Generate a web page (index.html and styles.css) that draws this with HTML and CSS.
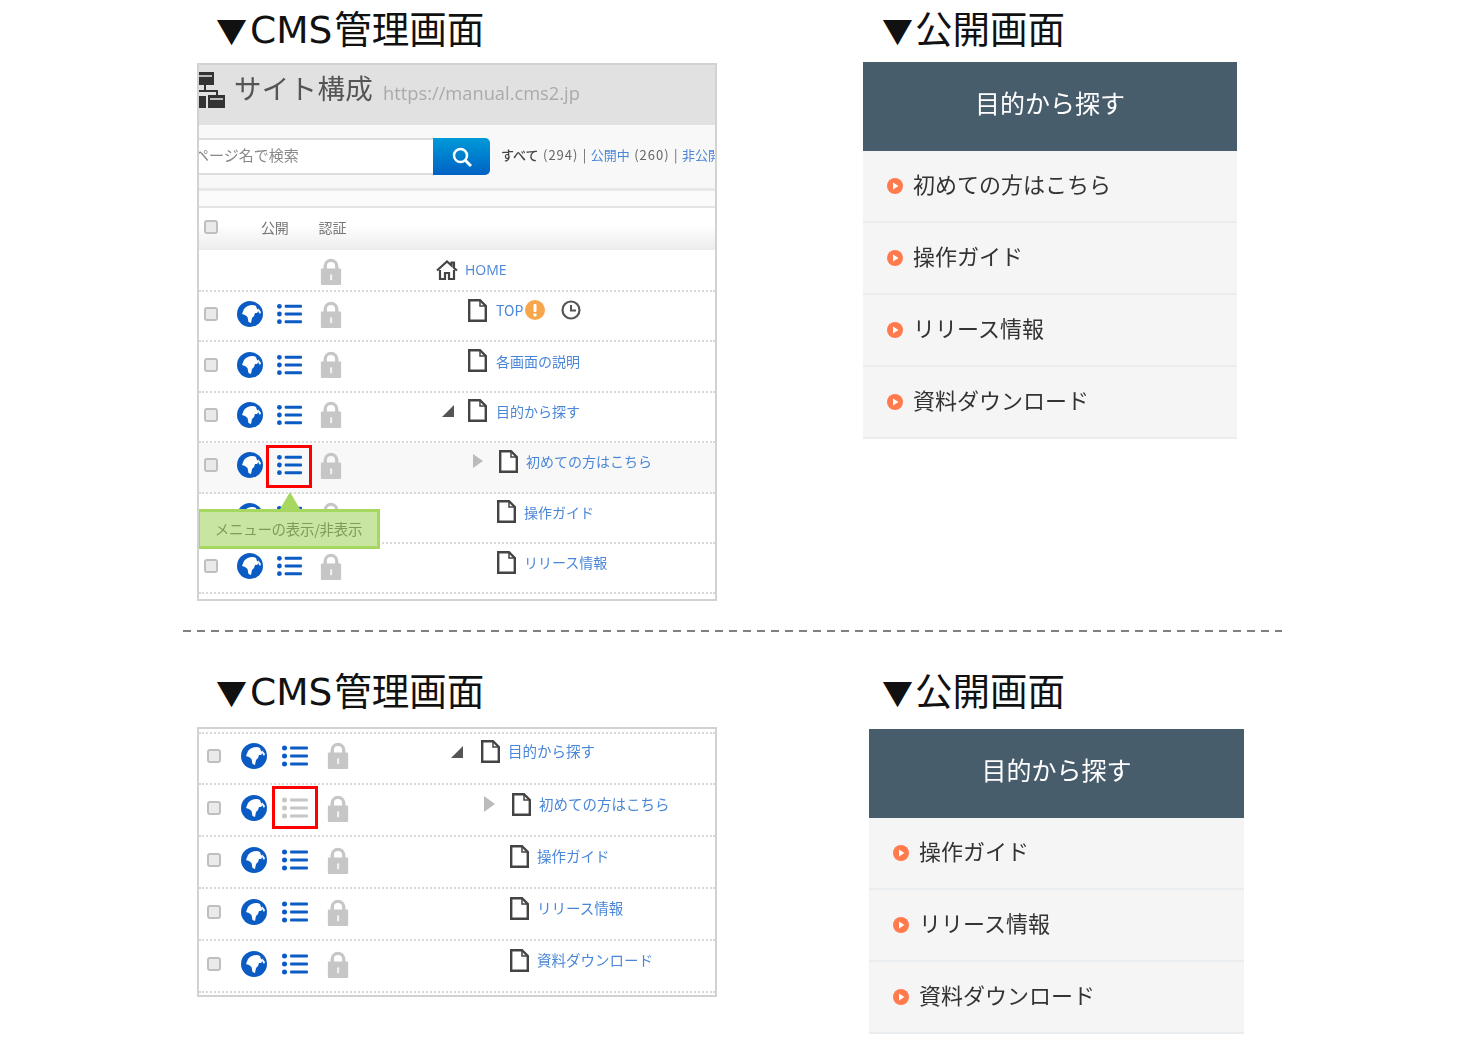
FILE: index.html
```html
<!DOCTYPE html>
<html lang="ja">
<head>
<meta charset="utf-8">
<title>メニューの表示/非表示</title>
<link rel="stylesheet" href="styles.css">
</head>
<body>
<svg class="sprite" xmlns="http://www.w3.org/2000/svg">
  <symbol id="globe" viewBox="0 0 26 26">
    <circle cx="13" cy="13" r="13" fill="#0a5cc4"/>
    <path d="M7 8C10 4 16 3 19 5L20 8L22 9L20 12L18 12L17 15L15 17L14 22L11.500 21L10.500 16L8 14L5 13Z" fill="#fff"/>
    <path d="M21 7L24 11L23 13L21.500 11Z" fill="#fff"/>
  </symbol>
  <symbol id="list" viewBox="0 0 26 22">
    <circle cx="2.500" cy="3" r="2.500"/><circle cx="2.500" cy="11" r="2.500"/><circle cx="2.500" cy="19" r="2.500"/>
    <rect x="8" y="1.500" width="18" height="3" rx="1"/><rect x="8" y="9.500" width="18" height="3" rx="1"/><rect x="8" y="17.500" width="18" height="3" rx="1"/>
  </symbol>
  <symbol id="lock" viewBox="0 0 22 28">
    <path d="M5 13V8.500a6 6 0 0 1 12 0V13" fill="none" stroke="#c6c6c6" stroke-width="3.500"/>
    <rect x="0.500" y="11" width="21" height="17" rx="1" fill="#c6c6c6"/>
    <rect x="10" y="17" width="2.200" height="6" fill="#f2f2f2"/>
  </symbol>
  <symbol id="page" viewBox="0 0 19 23">
    <path d="M1.200 1.200H12L17.800 7V21.800H1.200Z" fill="#fff" stroke="#444" stroke-width="2.400"/>
    <path d="M12 1V7H18" fill="none" stroke="#444" stroke-width="1.500"/>
  </symbol>
  <symbol id="home" viewBox="0 0 22 20">
    <path d="M1 10.500L11 1.500L15.500 5.500V2.500H18V8L21 10.500" fill="none" stroke="#444" stroke-width="2.200"/>
    <path d="M4 10V19H9V13H13V19H18V10" fill="#fff" stroke="#444" stroke-width="2.200"/>
  </symbol>
  <symbol id="clock" viewBox="0 0 20 20">
    <circle cx="10" cy="10" r="8.500" fill="#fff" stroke="#555" stroke-width="2.200"/>
    <path d="M10 5V10.500H15" fill="none" stroke="#555" stroke-width="2"/>
  </symbol>
  <symbol id="warn" viewBox="0 0 20 20">
    <circle cx="10" cy="10" r="10" fill="#f7a64c"/>
    <rect x="8.500" y="4" width="3" height="8" rx="1" fill="#fff"/>
    <circle cx="10" cy="15" r="1.700" fill="#fff"/>
  </symbol>
  <symbol id="sitemap" viewBox="0 0 28 36">
    <rect x="0" y="0" width="17" height="13" fill="#333"/><rect x="2" y="3" width="13" height="2" fill="#bbb"/>
    <path d="M8 13V19M0 19H20V24" fill="none" stroke="#333" stroke-width="2"/>
    <rect x="0" y="24" width="9" height="12" fill="#333"/>
    <rect x="11" y="23" width="17" height="13" fill="#333"/><rect x="13" y="26" width="13" height="2" fill="#bbb"/>
  </symbol>
  <symbol id="search" viewBox="0 0 20 20">
    <circle cx="8.500" cy="8.500" r="6.500" fill="none" stroke="#fff" stroke-width="2.500"/>
    <path d="M13 13L19 19" stroke="#fff" stroke-width="3"/>
  </symbol>
  <symbol id="bullet" viewBox="0 0 16 16">
    <circle cx="8" cy="8" r="8" fill="#ff7a4d"/>
    <path d="M6 4.500L11.500 8L6 11.500Z" fill="#fff"/>
  </symbol>
</svg>

<section class="sheet sheet-top">
  <div class="col-cms">
    <h2 class="heading"><span class="h-tri">▼</span><span class="h-cms">CMS</span>管理画面</h2>
    <div class="cms cms-a">
      <div class="title-bar">
        <svg class="i-sitemap"><use href="#sitemap"/></svg>
        <span class="title-text">サイト構成</span>
        <span class="title-url">https://manual.cms2.jp</span>
      </div>
      <div class="search-bar">
        <div class="search-input"><span class="search-ph">ページ名で検索</span></div>
        <div class="search-btn"><svg class="i-search"><use href="#search"/></svg></div>
        <div class="filter"><b class="filter-on">すべて</b> <span class="num">(294)</span> | <span class="link">公開中</span> <span class="num">(260)</span> | <span class="link">非公開</span></div>
      </div>
      <div class="band"></div>
      <div class="thead">
        <span class="check"></span>
        <span class="th th-pub">公開</span>
        <span class="th th-auth">認証</span>
      </div>
      <div class="row row-home">
        <svg class="i-lock lock-only"><use href="#lock"/></svg>
        <div class="tree tree-home"><svg class="i-home"><use href="#home"/></svg><span class="link label label-home">HOME</span></div>
      </div>
      <div class="row">
        <span class="check"></span><svg class="i-globe"><use href="#globe"/></svg><span class="list-cell"><svg class="i-list"><use href="#list"/></svg></span><svg class="i-lock"><use href="#lock"/></svg>
        <div class="tree d1"><span class="slot"></span><svg class="i-page"><use href="#page"/></svg><span class="link label">TOP</span><svg class="i-warn"><use href="#warn"/></svg><svg class="i-clock"><use href="#clock"/></svg></div>
      </div>
      <div class="row">
        <span class="check"></span><svg class="i-globe"><use href="#globe"/></svg><span class="list-cell"><svg class="i-list"><use href="#list"/></svg></span><svg class="i-lock"><use href="#lock"/></svg>
        <div class="tree d1"><span class="slot"></span><svg class="i-page"><use href="#page"/></svg><span class="link label">各画面の説明</span></div>
      </div>
      <div class="row">
        <span class="check"></span><svg class="i-globe"><use href="#globe"/></svg><span class="list-cell"><svg class="i-list"><use href="#list"/></svg></span><svg class="i-lock"><use href="#lock"/></svg>
        <div class="tree d1"><span class="slot"><span class="tri-open"></span></span><svg class="i-page"><use href="#page"/></svg><span class="link label">目的から探す</span></div>
      </div>
      <div class="row row-hover">
        <span class="check"></span><svg class="i-globe"><use href="#globe"/></svg>
        <span class="list-cell"><svg class="i-list"><use href="#list"/></svg><span class="mark"></span>
          <span class="tip">メニューの表示/非表示</span></span>
        <svg class="i-lock"><use href="#lock"/></svg>
        <div class="tree d2"><span class="slot"><span class="tri-closed"></span></span><svg class="i-page"><use href="#page"/></svg><span class="link label">初めての方はこちら</span></div>
      </div>
      <div class="row">
        <span class="check"></span><svg class="i-globe"><use href="#globe"/></svg><span class="list-cell"><svg class="i-list"><use href="#list"/></svg></span><svg class="i-lock"><use href="#lock"/></svg>
        <div class="tree leaf"><span class="slot"></span><svg class="i-page"><use href="#page"/></svg><span class="link label">操作ガイド</span></div>
      </div>
      <div class="row">
        <span class="check"></span><svg class="i-globe"><use href="#globe"/></svg><span class="list-cell"><svg class="i-list"><use href="#list"/></svg></span><svg class="i-lock"><use href="#lock"/></svg>
        <div class="tree leaf"><span class="slot"></span><svg class="i-page"><use href="#page"/></svg><span class="link label">リリース情報</span></div>
      </div>
    </div>
  </div>
  <div class="col-pub">
    <h2 class="heading"><span class="h-tri">▼</span>公開画面</h2>
    <div class="pub">
      <div class="pub-head">目的から探す</div>
      <div class="pub-row"><svg class="i-bullet"><use href="#bullet"/></svg>初めての方はこちら</div>
      <div class="pub-row"><svg class="i-bullet"><use href="#bullet"/></svg>操作ガイド</div>
      <div class="pub-row"><svg class="i-bullet"><use href="#bullet"/></svg>リリース情報</div>
      <div class="pub-row"><svg class="i-bullet"><use href="#bullet"/></svg>資料ダウンロード</div>
    </div>
  </div>
</section>

<div class="divider"></div>

<section class="sheet sheet-bottom">
  <div class="col-cms">
    <h2 class="heading"><span class="h-tri">▼</span><span class="h-cms">CMS</span>管理画面</h2>
    <div class="cms cms-b">
      <div class="row">
        <span class="check"></span><svg class="i-globe"><use href="#globe"/></svg><span class="list-cell"><svg class="i-list"><use href="#list"/></svg></span><svg class="i-lock"><use href="#lock"/></svg>
        <div class="tree d1"><span class="slot"><span class="tri-open"></span></span><svg class="i-page"><use href="#page"/></svg><span class="link label">目的から探す</span></div>
      </div>
      <div class="row">
        <span class="check"></span><svg class="i-globe"><use href="#globe"/></svg><span class="list-cell"><svg class="i-list i-list-off"><use href="#list"/></svg><span class="mark"></span></span><svg class="i-lock"><use href="#lock"/></svg>
        <div class="tree d2"><span class="slot"><span class="tri-closed"></span></span><svg class="i-page"><use href="#page"/></svg><span class="link label">初めての方はこちら</span></div>
      </div>
      <div class="row">
        <span class="check"></span><svg class="i-globe"><use href="#globe"/></svg><span class="list-cell"><svg class="i-list"><use href="#list"/></svg></span><svg class="i-lock"><use href="#lock"/></svg>
        <div class="tree leaf"><span class="slot"></span><svg class="i-page"><use href="#page"/></svg><span class="link label">操作ガイド</span></div>
      </div>
      <div class="row">
        <span class="check"></span><svg class="i-globe"><use href="#globe"/></svg><span class="list-cell"><svg class="i-list"><use href="#list"/></svg></span><svg class="i-lock"><use href="#lock"/></svg>
        <div class="tree leaf"><span class="slot"></span><svg class="i-page"><use href="#page"/></svg><span class="link label">リリース情報</span></div>
      </div>
      <div class="row">
        <span class="check"></span><svg class="i-globe"><use href="#globe"/></svg><span class="list-cell"><svg class="i-list"><use href="#list"/></svg></span><svg class="i-lock"><use href="#lock"/></svg>
        <div class="tree leaf"><span class="slot"></span><svg class="i-page"><use href="#page"/></svg><span class="link label">資料ダウンロード</span></div>
      </div>
    </div>
  </div>
  <div class="col-pub">
    <h2 class="heading"><span class="h-tri">▼</span>公開画面</h2>
    <div class="pub pub-b">
      <div class="pub-head">目的から探す</div>
      <div class="pub-row"><svg class="i-bullet"><use href="#bullet"/></svg>操作ガイド</div>
      <div class="pub-row"><svg class="i-bullet"><use href="#bullet"/></svg>リリース情報</div>
      <div class="pub-row"><svg class="i-bullet"><use href="#bullet"/></svg>資料ダウンロード</div>
    </div>
  </div>
</section>
</body>
</html>
```
FILE: styles.css
```css
* { box-sizing: border-box; }
html, body { margin: 0; padding: 0; background: #fff; }
body {
  width: 1465px;
  height: 1048px;
  overflow: hidden;
  font-family: "Noto Sans CJK JP", "Liberation Sans", sans-serif;
}
.sprite { display: none; }

.sheet { display: flex; align-items: flex-start; padding-left: 197px; }
.sheet-top { height: 630px; }
.sheet-bottom { padding-top: 30px; }
.col-cms { width: 520px; }
.col-pub { margin-left: 146px; width: 385px; }

.heading {
  margin: 0;
  height: 62px;
  padding-left: 19px;
  font-size: 37.500px;
  font-weight: 400;
  line-height: 54px;
  color: #111;
  white-space: nowrap;
}
.h-tri { font-size: 31px; margin-right: 2px; }
.h-cms { font-family: "DejaVu Sans", sans-serif; font-size: 37.500px; margin-left: 1px; margin-right: 2px; }

.divider {
  margin-left: 183px;
  width: 1099px;
  height: 2px;
  background: repeating-linear-gradient(90deg, #808080 0 8px, transparent 8px 14px);
}

/* CMS panel */
.cms {
  border: 2px solid #d2d2d2;
  overflow: hidden;
  background: #fff;
  position: relative;
  filter: blur(.4px);
  --check-l: 5px;
  --globe-l: 19px;
  --list-l: 14px;
  --list-w: 25px;
  --globe: 26px;
  --lock-l: 18px;
  --lock-w: 22px;
  --lock-h: 27px;
  --row: 50.400px;
  --mark-l: -11px;
  --mark-t: -9px;
}
.cms-a { margin-top: 1px; height: 538px; }
.cms-b {
  margin-top: 3px;
  height: 270px;
  padding-top: 3px;
  --check-l: 8px;
  --globe-l: 20px;
  --list-l: 15px;
  --list-w: 26px;
  --lock-l: 19px;
  --row: 52px;
  --mark-l: -10px;
  --mark-t: -11px;
}
.cms-b .row:first-child { border-top: 2px dotted #d8d8d8; height: 53px; padding-bottom: 6px; }

.title-bar {
  height: 60px;
  padding-bottom: 14px;
  background: #e1e1e1;
  display: flex;
  align-items: center;
  white-space: nowrap;
}
.i-sitemap { width: 28px; height: 36px; margin-left: -2px; margin-top: 4px; flex: none; }
.title-text { margin-left: 9px; font-size: 27.500px; color: #555; letter-spacing: .3px; line-height: 1; }
.title-url { margin-left: 10px; margin-top: 10px; font-family: "Open Sans", sans-serif; font-size: 18.300px; color: #aaa; line-height: 1; }

.search-bar {
  height: 63px;
  background: #f8f8f8;
  display: flex;
  align-items: center;
  white-space: nowrap;
}
.search-input {
  flex: none;
  width: 234px;
  height: 37px;
  background: #fff;
  border-top: 2px solid #ddd;
  border-bottom: 2px solid #ddd;
  overflow: hidden;
  display: flex;
  align-items: center;
}
.search-ph { font-size: 15px; color: #888; margin-left: -5px; margin-top: -4px; line-height: 1; }
.search-btn {
  width: 57px;
  height: 37px;
  flex: none;
  border-radius: 0 5px 5px 0;
  background: linear-gradient(#0099d8, #0062c4);
  display: flex;
  align-items: center;
  justify-content: center;
}
.i-search { width: 20px; height: 20px; }
.filter { flex: none; margin-left: 11px; margin-bottom: 5px; font-size: 13px; color: #666; line-height: 1; word-spacing: 1.500px; }
.filter-on { font-weight: 500; color: #444; }
.num { letter-spacing: 1px; }
.link { color: #4a86d8; }

.band {
  height: 20px;
  background: #fbfbfb;
  border-top: 3px solid #e8e8e8;
  border-bottom: 2px solid #e4e4e4;
}

.thead {
  height: 42px;
  background: linear-gradient(#fff, #fff 40%, #ececec);
  display: flex;
  align-items: center;
  padding-left: var(--check-l);
  padding-bottom: 5px;
}
.th { font-size: 14px; color: #777; line-height: 1; letter-spacing: -.2px; }
.th-pub { margin-left: 43px; }
.th-auth { margin-left: 30px; }

.check {
  flex: none;
  width: 14px;
  height: 14px;
  border: 2px solid #bfbfbf;
  border-radius: 3px;
  background: #eaeaea;
}

.row {
  height: var(--row);
  border-bottom: 2px dotted #d8d8d8;
  display: flex;
  align-items: center;
  padding-left: var(--check-l);
  padding-bottom: 4px;
}
.row-home { height: 42px; padding-bottom: 0; padding-top: 3px; padding-left: 121px; }
.row-hover { background: #f8f8f8; }

.i-globe { flex: none; width: var(--globe); height: var(--globe); margin-left: var(--globe-l); }
.list-cell { position: relative; flex: none; display: flex; margin-left: var(--list-l); width: var(--list-w); height: 22px; }
.i-list { width: var(--list-w); height: 22px; fill: #0a5cc4; }
.i-list-off { fill: #c6c6c6; }
.i-lock { flex: none; width: var(--lock-w); height: var(--lock-h); margin-left: var(--lock-l); }
.lock-only { margin-left: 0; }

.mark {
  position: absolute;
  left: var(--mark-l);
  top: var(--mark-t);
  width: 46px;
  height: 43px;
  border: 3px solid #f00;
}
.tip {
  position: absolute;
  z-index: 2;
  left: -80px;
  top: 55px;
  width: 183px;
  height: 40px;
  background: #c8e5a2;
  border: 3px solid #a6d85f;
  color: #7f9c55;
  font-size: 14.500px;
  line-height: 33px;
  text-align: center;
  white-space: nowrap;
  letter-spacing: -.3px;
}
.tip::before {
  content: "";
  position: absolute;
  left: 80px;
  top: -20px;
  border-left: 10px solid transparent;
  border-right: 10px solid transparent;
  border-bottom: 17px solid #a6d85f;
}

.tree {
  display: flex;
  align-items: center;
  margin-top: -8px;
  white-space: nowrap;
  margin-left: var(--tree-l);
}
.cms-a { --l-d1: 100px; --l-d2: 131px; --l-leaf: 129px; }
.cms-b { --l-d1: 103px; --l-d2: 134px; --l-leaf: 132px; }
.d1 { --tree-l: var(--l-d1); }
.d2 { --tree-l: var(--l-d2); }
.leaf { --tree-l: var(--l-leaf); }
.tree-home { margin-left: 94px; margin-top: -4px; }
.i-home { width: 22px; height: 20px; }
.slot { width: 26px; flex: none; display: flex; align-items: center; }
.cms-b .slot { width: 29px; }
.tri-open {
  width: 0;
  height: 0;
  border-left: 12px solid transparent;
  border-bottom: 12px solid #555;
}
.cms-b .tri-open { margin-left: -1px; }
.tri-closed {
  width: 0;
  height: 0;
  border-left: 10px solid #bbb;
  border-top: 7.500px solid transparent;
  border-bottom: 7.500px solid transparent;
}
.cms-b .tri-closed { margin-left: 1px; border-left-width: 11px; border-top-width: 8px; border-bottom-width: 8px; }
.i-page { width: 19px; height: 23px; flex: none; }
.label { margin-left: 8px; font-size: 14px; letter-spacing: 0; line-height: 1; }
.cms-a .d1 .label { margin-left: 9px; }
.cms-b .label { font-size: 14.500px; }
.cms-a .tree-home .label-home { margin-left: 7px; font-family: "Open Sans", sans-serif; }
.i-warn { width: 20px; height: 20px; margin-left: 2px; }
.i-clock { width: 20px; height: 20px; margin-left: 16px; }

/* Public panel */
.pub { width: 374px; filter: blur(.3px); }
.pub-b { width: 375px; margin-left: 6px; margin-top: 5px; }
.pub-head {
  height: 89px;
  background: #475d6c;
  color: #fff;
  font-size: 25px;
  line-height: 81px;
  text-align: center;
}
.pub-row {
  height: 72px;
  background: #f5f5f5;
  border-bottom: 2px solid #e9edf0;
  display: flex;
  align-items: center;
  padding-left: 24px;
  padding-bottom: 7px;
  font-size: 22px;
  color: #333;
  line-height: 1;
}
.pub-row:first-of-type { height: 71px; }
.i-bullet { width: 16px; height: 16px; margin-right: 10px; margin-top: 7px; flex: none; }
```
